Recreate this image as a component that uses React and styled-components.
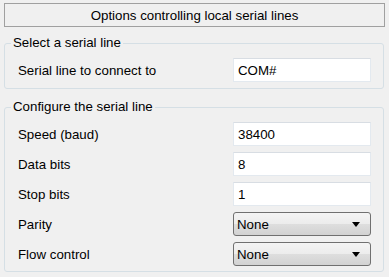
import React from "react";
import styled, { createGlobalStyle } from "styled-components";

const Global = createGlobalStyle`
  html, body { margin: 0; padding: 0; background: #f0f0f0; }
  body { font-family: "Liberation Sans", Arial, sans-serif; font-size: 13.3px; color: #000; }
  * { box-sizing: border-box; }
`;

const Page = styled.div`
  width: 389px;
  height: 277px;
  padding: 3px 4px 0 4px;
  display: flex;
  flex-direction: column;
  overflow: hidden;
`;

const Header = styled.div`
  width: 381px;
  height: 24px;
  border: 1px solid #a0a0a0;
  background: #f0f0f0;
  display: flex;
  align-items: center;
  justify-content: center;
  font-size: 13.3px;
`;

const Group = styled.fieldset`
  margin: ${(p) => p.$top}px 0 0 0;
  width: 380px;
  border: 1px solid #d5dfe5;
  border-radius: 3px;
  padding: ${(p) => p.$padTop}px 12px ${(p) => p.$padBottom}px 13px;
  display: flex;
  flex-direction: column;
  gap: 6px;
  min-width: 0;
`;

const Legend = styled.legend`
  margin-left: -7px;
  padding: 0 2px;
  line-height: 16px;
  font-size: 13.3px;
`;

const Row = styled.div`
  display: grid;
  grid-template-columns: 1fr 138px;
  align-items: center;
  height: 24px;
`;

const Label = styled.span`
  font-size: 13.3px;
`;

const TextBox = styled.div`
  height: 24px;
  background: #fff;
  border: 1px solid #e3e9ef;
  border-top-color: #d8dde3;
  padding: 0 4px;
  display: flex;
  align-items: center;
  font-size: 13.3px;
`;

const Select = styled.div`
  height: 24px;
  border: 1px solid #707070;
  border-radius: 3px;
  background: linear-gradient(#f4f4f4 0%, #ececec 50%, #dedede 51%, #d2d2d2 100%);
  padding: 0 10px 0 3px;
  display: flex;
  align-items: center;
  justify-content: space-between;
  font-size: 13.3px;
`;

const Arrow = () => (
  <svg width="8" height="5" viewBox="0 0 8 5">
    <path d="M0 0 H8 L4 5 Z" fill="#000" />
  </svg>
);

const Field = ({ label, value }) => (
  <Row>
    <Label>{label}</Label>
    <TextBox>{value}</TextBox>
  </Row>
);

const Drop = ({ label, value }) => (
  <Row>
    <Label>{label}</Label>
    <Select>
      <span>{value}</span>
      <Arrow />
    </Select>
  </Row>
);

export default function App() {
  return (
    <>
      <Global />
      <Page>
        <Header>Options controlling local serial lines</Header>
        <Group $top={8} $padTop={7} $padBottom={6}>
          <Legend>Select a serial line</Legend>
          <Field label="Serial line to connect to" value="COM#" />
        </Group>
        <Group $top={10} $padTop={7} $padBottom={5}>
          <Legend>Configure the serial line</Legend>
          <Field label="Speed (baud)" value="38400" />
          <Field label="Data bits" value="8" />
          <Field label="Stop bits" value="1" />
          <Drop label="Parity" value="None" />
          <Drop label="Flow control" value="None" />
        </Group>
      </Page>
    </>
  );
}
